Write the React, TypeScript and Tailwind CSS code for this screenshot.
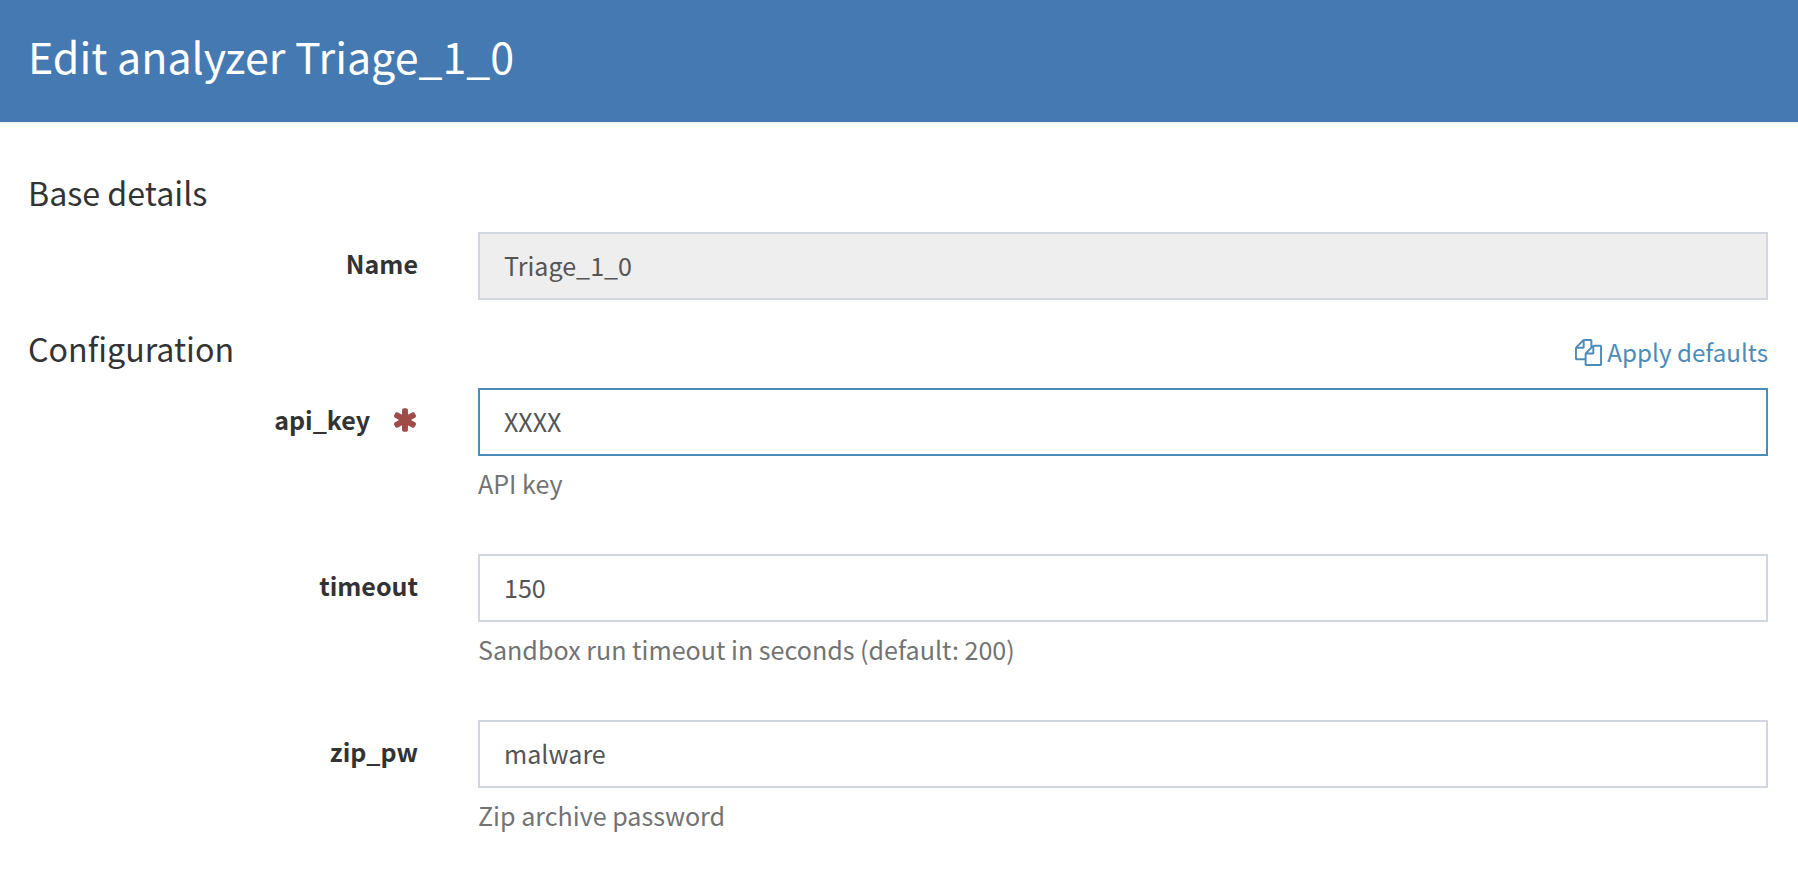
import type { ReactNode } from "react";

function FilesIcon() {
  return (
    <svg viewBox="0 0 1792 1792" className="mt-px h-[27px] w-[27px] fill-current" aria-hidden="true">
      <path d="M1696 384q40 0 68 28t28 68v1216q0 40-28 68t-68 28h-960q-40 0-68-28t-28-68v-288h-544q-40 0-68-28t-28-68v-672q0-40 20-88t48-76l408-408q28-28 76-48t88-20h416q40 0 68 28t28 68v328q68-40 128-40h416zm-544 213l-299 299h299v-299zm-640-384l-299 299h299v-299zm196 647l316-316v-416h-384v416q0 40-28 68t-68 28h-416v640h512v-256q0-40 20-88t48-76zm956 804v-1152h-384v416q0 40-28 68t-68 28h-416v640h896z" />
    </svg>
  );
}

function AsteriskIcon() {
  return (
    <svg viewBox="118 0 1428 1536" className="mt-0.5 mr-0.5 h-6 w-[22px] fill-[#9f4b47]" aria-hidden="true">
      <path d="M1482 922q46 26 59.5 77.5t-12.5 97.5l-64 110q-26 46-77.5 59.5t-97.5-12.5l-266-153v307q0 52-38 90t-90 38h-128q-52 0-90-38t-38-90v-307l-266 153q-46 26-97.5 12.5t-77.5-59.5l-64-110q-26-46-12.5-97.5t59.5-77.5l266-154-266-154q-46-26-59.5-77.5t12.5-97.5l64-110q26-46 77.5-59.5t97.5 12.5l266 153v-307q0-52 38-90t90-38h128q52 0 90 38t38 90v307l266-153q46-26 97.5-12.5t77.5 59.5l64 110q26 46 12.5 97.5t-59.5 77.5l-266 154z" />
    </svg>
  );
}

type FieldProps = {
  name: string;
  value: string;
  help?: string;
  required?: boolean;
  state?: "normal" | "active" | "disabled";
};

const inputStates = {
  normal: "border-[#d2d6de] bg-white",
  active: "border-[#4c8cb9] bg-white",
  disabled: "border-[#d2d6de] bg-[#eeeeee]",
};

function Field({ name, value, help, required, state = "normal" }: FieldProps) {
  return (
    <div className="flex gap-[60px]">
      <label
        htmlFor={name}
        className="flex h-[51px] w-[390px] shrink-0 items-center justify-end gap-6 pt-[11px] text-[25px] leading-10 font-bold text-[#333333]"
      >
        {name}
        {required && <AsteriskIcon />}
      </label>
      <div className="grow">
        <input
          id={name}
          defaultValue={value}
          readOnly={state === "disabled"}
          className={`block h-[68px] w-full border-2 px-6 pb-0.5 text-[#555555] outline-none ${inputStates[state]}`}
        />
        {help && <p className="mt-[7px] leading-10 text-[#737373]">{help}</p>}
      </div>
    </div>
  );
}

function SectionTitle({ children }: { children: ReactNode }) {
  return <h4 className="text-[32.2px] leading-10 text-[#333333]">{children}</h4>;
}

export default function App() {
  return (
    <main className="min-h-screen bg-white font-['Noto_Sans_CJK_SC',sans-serif] text-[25.08px]">
      <header className="h-[124px] border-b-2 border-[#f4f4f4] bg-[#4579b2] px-7 pt-[29px]">
        <h3 className="text-[42.95px] leading-[52px] text-white">Edit analyzer Triage_1_0</h3>
      </header>
      <form className="pt-12 pr-[30px] pl-7">
        <SectionTitle>Base details</SectionTitle>
        <div className="mt-5">
          <Field name="Name" value="Triage_1_0" state="disabled" />
        </div>
        <div className="mt-7 flex h-10 items-start justify-between">
          <SectionTitle>Configuration</SectionTitle>
          <a className="mt-1 flex items-center gap-[5.5px] text-[24.2px] leading-10 text-[#4c8cb9]">
            <FilesIcon />
            Apply defaults
          </a>
        </div>
        <div className="mt-5 flex flex-col gap-[51px]">
          <Field name="api_key" value="XXXX" help="API key" required state="active" />
          <Field name="timeout" value="150" help="Sandbox run timeout in seconds (default: 200)" />
          <Field name="zip_pw" value="malware" help="Zip archive password" />
        </div>
      </form>
    </main>
  );
}
